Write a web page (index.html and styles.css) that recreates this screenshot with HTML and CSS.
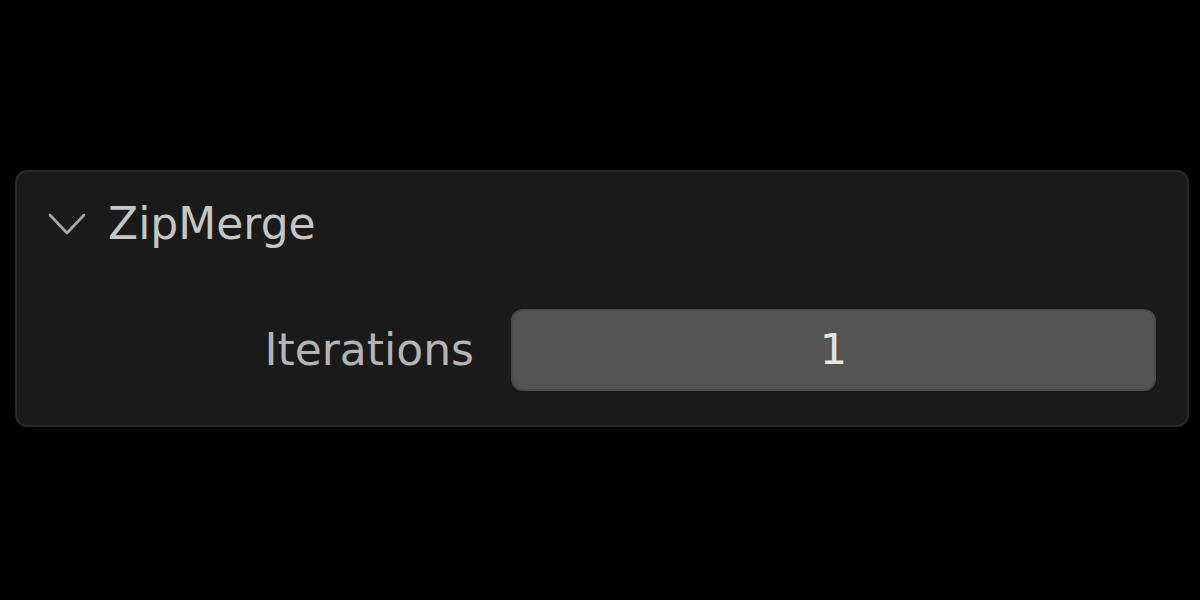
FILE: index.html
```html
<!DOCTYPE html>
<html>
<head>
<meta charset="utf-8">
<link rel="stylesheet" href="styles.css">
</head>
<body>
<div class="panel">
  <div class="header">
    <svg class="chevron" width="38" height="24" viewBox="0 0 38 24"><path d="M2 3 L19 21 L36 3" fill="none" stroke="#a8a8a8" stroke-width="2.6" stroke-linecap="round" stroke-linejoin="round"/></svg>
    <span class="title">ZipMerge</span>
  </div>
  <div class="row">
    <div class="label">Iterations</div>
    <div class="field">1</div>
  </div>
</div>
</body>
</html>
```
FILE: styles.css
```css
html, body {
  margin: 0;
  padding: 0;
  background: #000;
  width: 1200px;
  height: 600px;
  overflow: hidden;
}
body {
  font-family: "DejaVu Sans", sans-serif;
  padding-top: 170px;
  box-sizing: border-box;
}
.panel {
  margin-left: 15px;
  width: 1174px;
  height: 257px;
  box-sizing: border-box;
  background: #1a1a1a;
  border: 2px solid #2a2a2a;
  border-radius: 12px;
  display: flex;
  flex-direction: column;
}
.header {
  height: 104px;
  display: flex;
  align-items: center;
  padding-left: 31px;
  gap: 22px;
}
.chevron {
  display: block;
}
.title {
  font-size: 44px;
  color: #c6c6c6;
  line-height: 1;
}
.row {
  margin-top: 33px;
  height: 82px;
  display: flex;
  align-items: center;
  padding-right: 31px;
}
.label {
  width: 457px;
  text-align: right;
  font-size: 44px;
  color: #b4b4b4;
  padding-bottom: 2px;
}
.field {
  margin-left: 37px;
  flex: 1;
  height: 82px;
  box-sizing: border-box;
  background: #545454;
  border: 2px solid #4a4a4a;
  border-radius: 12px;
  display: flex;
  align-items: center;
  justify-content: center;
  font-size: 43px;
  color: #e4e4e4;
  padding-bottom: 3px;
}
```
